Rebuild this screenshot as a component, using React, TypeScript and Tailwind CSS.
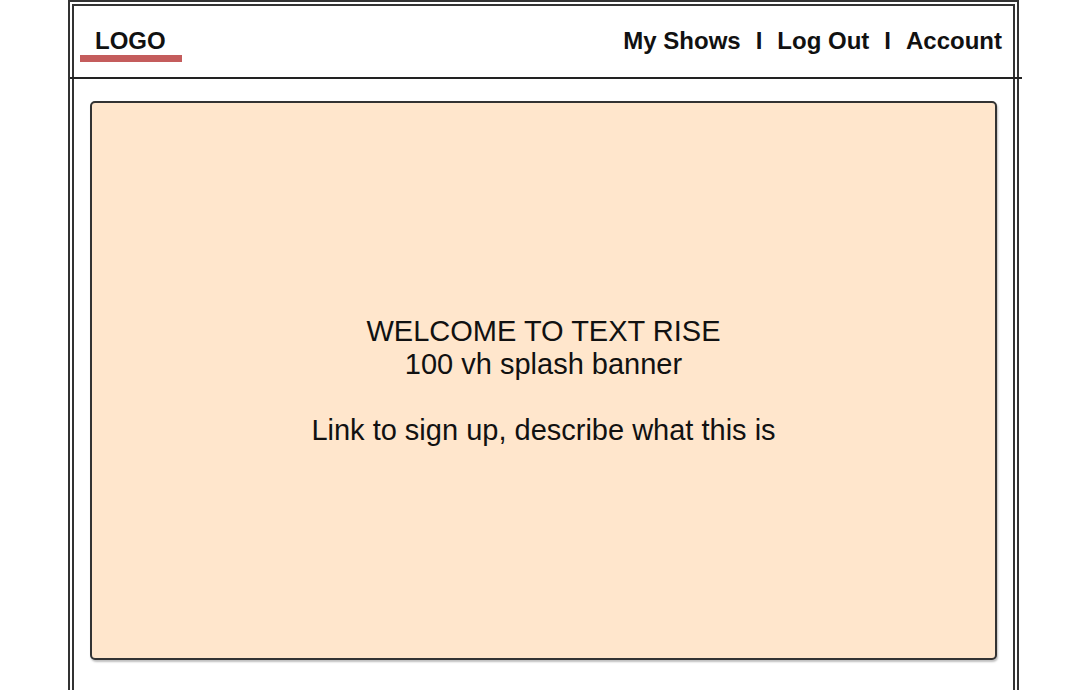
import React from 'react';

const NAV = ['My Shows', 'Log Out', 'Account'];

const App: React.FC = () => {
  return (
    <div className="h-[690px] overflow-hidden bg-white font-['Liberation_Sans',Arial,sans-serif] text-[#111]">
      <div className="ml-[68px] w-[951px] h-[720px] border-2 border-b-0 border-[#333] p-[2px] pb-0">
        <div className="h-full border-2 border-b-0 border-[#333]">
          {/* header */}
          <header className="-ml-[4px] -mr-[9px] h-[73px] border-b-2 border-[#222] flex items-start justify-between">
            <div className="ml-[10px] mt-[23px] flex flex-col">
              <span className="ml-[15px] text-[24px] leading-[24px] font-bold">LOGO</span>
              <span className="mt-[2px] w-[102px] h-[7px] bg-[#c45c5c]" />
            </div>
            <nav className="mr-[20px] mt-[23px] flex items-center gap-[15px] text-[24px] leading-[24px] font-bold">
              {NAV.map((item, idx) => (
                <React.Fragment key={item}>
                  {idx > 0 && <span>I</span>}
                  <span>{item}</span>
                </React.Fragment>
              ))}
            </nav>
          </header>

          {/* splash banner */}
          <div className="px-[16px] pt-[22px]">
            <div className="h-[559px] rounded-[5px] border-2 border-[#333] bg-[#ffe6cc] shadow-[1px_2px_2px_rgba(0,0,0,0.25)] flex flex-col items-center justify-center text-center text-[29px] leading-[33px]">
              <p>WELCOME TO TEXT RISE</p>
              <p>100 vh splash banner</p>
              <p className="mt-[33px]">Link to sign up, describe what this is</p>
            </div>
          </div>
        </div>
      </div>
    </div>
  );
};

export default App;
